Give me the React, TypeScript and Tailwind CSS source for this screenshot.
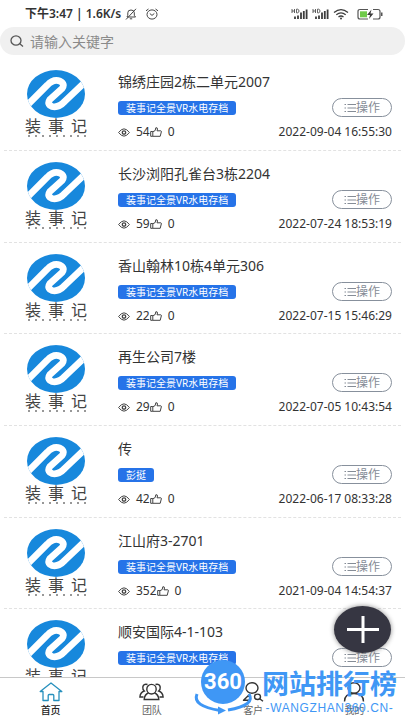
import React, { useState, type JSX } from 'react'

interface Project
{
    id: number;
    title: string;
    tag: string;
    stats?: { views: number; likes: number; date: string };
}

const projects: Project[] =
[
    { id: 1, title: "锦绣庄园2栋二单元2007", tag: "装事记全景VR水电存档", stats: { views: 54, likes: 0, date: "2022-09-04 16:55:30" } },
    { id: 2, title: "长沙浏阳孔雀台3栋2204", tag: "装事记全景VR水电存档", stats: { views: 59, likes: 0, date: "2022-07-24 18:53:19" } },
    { id: 3, title: "香山翰林10栋4单元306", tag: "装事记全景VR水电存档", stats: { views: 22, likes: 0, date: "2022-07-15 15:46:29" } },
    { id: 4, title: "再生公司7楼", tag: "装事记全景VR水电存档", stats: { views: 29, likes: 0, date: "2022-07-05 10:43:54" } },
    { id: 5, title: "传", tag: "彭挺", stats: { views: 42, likes: 0, date: "2022-06-17 08:33:28" } },
    { id: 6, title: "江山府3-2701", tag: "装事记全景VR水电存档", stats: { views: 352, likes: 0, date: "2021-09-04 14:54:37" } },
    { id: 7, title: "顺安国际4-1-103", tag: "装事记全景VR水电存档" },
];

const SignalSVG = (): JSX.Element => (
    <svg viewBox="0 0 17 12" className="w-[17px] h-3" fill="none" stroke="#3c3c3c">
        <path d="M1 1v4M1 3h2.500M3.500 1v4M5.500 1.200v3.600h1.300q1.200-.4 1.200-1.800t-1.200-1.800z" strokeWidth="0.8" />
        <path d="M4 11V8.500M7 11V7.500M10 11V4.500M12.800 11V3M15.600 11V1.500" strokeWidth="1.800" />
    </svg>
)

const StatusBar = (): JSX.Element => (
    <div className="flex h-[27px] shrink-0 items-center justify-between pl-[25px] pr-[22px] text-[12px] font-semibold text-[#333333]">
        <div className="flex items-center gap-1">
            <span>下午3:47 | 1.6K/s</span>

            <svg viewBox="0 0 12 12" className="w-3 h-3" fill="none" stroke="#444444" strokeWidth="1">
                <path d="M2 9h8.500L9.300 7.300V4.800Q9.300 2 6 2T2.800 4.800V7.300ZM4.800 10.800h2.400M11 .8 1 11.500" />
            </svg>

            <svg viewBox="0 0 14 12" className="ml-1 w-3.5 h-3" fill="none" stroke="#444444" strokeWidth="1">
                <ellipse cx="7" cy="6.500" rx="5" ry="4.600" />
                <path d="M1 2.800 3.500 1M13 2.800 10.500 1M4.800 5.500 7 7.400 9.300 5.500" />
            </svg>
        </div>

        <div className="flex items-center gap-1">
            <SignalSVG/>
            <SignalSVG/>

            <svg viewBox="0 0 16 12" className="w-4 h-3" fill="none" stroke="#3c3c3c" strokeWidth="1.300">
                <path d="M1 4.500Q8-1.200 15 4.500M3.300 6.800Q8 3 12.700 6.800M5.500 9Q8 7 10.500 9" />
                <circle cx="8" cy="10.500" r="1" fill="#3c3c3c" stroke="none" />
            </svg>

            <svg viewBox="0 0 26 12" className="ml-1 w-[26px] h-3">
                <path d="M11 1.500H3Q1 1.500 1 3.500V9Q1 11 3 11H11M16 1.500h5q2 0 2 2V9q0 2-2 2H16" fill="none" stroke="#555555" strokeWidth="1.200" />
                <rect x="3" y="3.300" width="7" height="6" fill="#6fca4a" />
                <path d="M14.500 1.500 10 7h3l-1 4 4.500-5.500h-3z" fill="#3c3c3c" />
                <rect x="24" y="4.500" width="1.500" height="3.500" fill="#555555" />
            </svg>
        </div>
    </div>
)

const LogoSVG = (): JSX.Element => (
    <svg viewBox="80 31 172 142" className="w-[58px] h-12">
        <defs>
            <clipPath id="logoClip">
                <ellipse cx="166" cy="102" rx="86" ry="71" />
            </clipPath>
        </defs>
        <g clipPath="url(#logoClip)">
            <rect x="80" y="31" width="172" height="142" fill="#1788dc" />
            <path
                d="M62 154 140 76Q159 56 178 64Q194 72 184 86L148 118Q138 132 154 139Q173 144 192 124L270 50"
                fill="none"
                stroke="#ffffff"
                strokeWidth="20"
            />
        </g>
    </svg>
)

const ProjectLogo = (): JSX.Element => (
    <div className="flex w-[62px] shrink-0 flex-col items-center pt-[11px]">
        <LogoSVG/>

        <div className="flex h-[17px] w-full justify-between text-[16px] leading-[17px] text-[#444444]">
            <span>装</span>
            <span>事</span>
            <span>记</span>
        </div>

        <svg viewBox="0 0 60 2" className="w-[60px] h-0.5">
            <path d="M2 1H60" stroke="#777777" strokeWidth="1.500" strokeDasharray="2 5" />
        </svg>
    </div>
)

const ProjectRow: React.FC<{ project: Project }> = ({project}): JSX.Element => (
    <li className="flex h-[92px] shrink-0 gap-[31px] overflow-hidden border-b border-dashed border-[#e2e2e2] pl-[21px] pr-[9px] nth-[3n]:h-[91px]">
        <ProjectLogo/>

        <div className="min-w-0 grow pt-3">
            <h2 className="truncate text-[14px] leading-[22px] text-[#333333]">{project.title}</h2>

            <div className="mt-[5px] flex items-center justify-between">
                <span className="h-[14px] rounded-[3px] bg-[#2673e8] px-2 text-[10px] leading-[14px] text-white">{project.tag}</span>

                <button type="button" className="flex h-[19px] w-[60px] items-center justify-center rounded-full border border-[#87909c] text-[12px] leading-4 text-[#858c96]">
                    <svg viewBox="0 0 12 10" className="w-3 h-2.5" stroke="#858c96" strokeWidth="1">
                        <path d="M3.500 1.500H12M3.500 5H12M3.500 8.500H12M.5 1.500H2M.5 5H2M.5 8.500H2" />
                    </svg>
                    操作
                </button>
            </div>

            {project.stats && (
                <div className="mt-[5px] flex h-5 items-center text-[12px] text-[#333333]">
                    <svg viewBox="0 0 12 9" className="mr-1.5 w-3 h-[9px]" fill="none" stroke="#444444" strokeWidth="1">
                        <path d="M.6 4.500Q6-2.800 11.400 4.500Q6 11.800.6 4.500Z" />
                        <circle cx="6" cy="4.500" r="1.700" strokeWidth="1.300" />
                    </svg>
                    <span>{project.stats.views}</span>
                    <svg viewBox="0 0 12 10" className="mr-1.5 w-3 h-2.5" fill="none" stroke="#444444" strokeWidth="1">
                        <path d="M.7 4.500H2.800V9.300H.7ZM2.800 4.800 5.200 3.500 5.800.8Q7.500.3 7.500 2L7 3.800H10.800Q11.600 4 11.300 5L10.200 9.300H2.800" />
                    </svg>
                    <span>{project.stats.likes}</span>
                    <time className="ml-auto">{project.stats.date}</time>
                </div>
            )}
        </div>
    </li>
)

const HomeSVG = (): JSX.Element => (
    <svg viewBox="0 0 24 20" className="w-6 h-5" fill="none" stroke="#2790bd" strokeWidth="1.300">
        <path d="M4 9.500H1.200L12 1 22.800 9.500H20V18.500H14.800V13.500Q14.800 12.500 13.800 12.500H10.200Q9.200 12.500 9.200 13.500V18.500H4Z" strokeLinejoin="round" />
    </svg>
)

const TeamSVG = (): JSX.Element => (
    <svg viewBox="0 0 25 20" className="w-[25px] h-5" fill="none" stroke="#333333" strokeWidth="1.400">
        <ellipse cx="12.500" cy="7.200" rx="4.700" ry="4.800" />
        <path d="M9.500 11Q5.500 12.500 5.200 17.500H19.800Q19.500 12.500 15.500 11" />
        <path d="M8.500 2.500Q4.500 1.500 3.800 5Q3.500 7.500 5.300 9Q1.200 10.500.9 15H4.500M16.500 2.500Q20.500 1.500 21.200 5Q21.500 7.500 19.700 9Q23.800 10.500 24.100 15H20.500" />
    </svg>
)

const CustomerSVG = (): JSX.Element => (
    <svg viewBox="0 0 22 20" className="w-[22px] h-5" fill="none" stroke="#333333" strokeWidth="1.400">
        <ellipse cx="10" cy="6" rx="6" ry="5.200" />
        <path d="M7.500 12.500 1.500 18.300H8Z" strokeLinejoin="round" />
        <ellipse cx="15.500" cy="14.800" rx="3" ry="2.700" />
        <path d="M17.700 16.700 21 19.300" />
    </svg>
)

const ProfileSVG = (): JSX.Element => (
    <svg viewBox="0 0 22 20" className="w-[22px] h-5" fill="none" stroke="#333333" strokeWidth="1.400">
        <ellipse cx="11" cy="6" rx="6" ry="5.200" />
        <path d="M1.500 19.500Q1.500 11.500 11 11.500T20.500 19.500" />
    </svg>
)

const tabs =
[
    { label: "首页", icon: <HomeSVG/> },
    { label: "团队", icon: <TeamSVG/> },
    { label: "客户", icon: <CustomerSVG/> },
    { label: "我的", icon: <ProfileSVG/> },
];

const Watermark = (): JSX.Element => (
    <div className="pointer-events-none absolute bottom-1 right-2 flex items-end gap-1.5 text-[#3f97f5]">
        <div className="relative mb-0.5 h-[54px] w-[62px]">
            <svg viewBox="0 0 62 54" className="w-[62px] h-[54px] overflow-visible" fill="none" stroke="#3f97f5">
                <circle cx="29" cy="22" r="22" fill="#3f97f5" stroke="none" />
                <path d="M3 34Q-2 46 26 50.500" strokeWidth="3" />
                <path d="M24 46.500 32 50.500 24 54.500Z" fill="#3f97f5" stroke="none" />
                <path d="M55 34Q62 45 34 50" strokeWidth="3" />
            </svg>
            <span className="absolute left-0 top-2 w-[58px] text-center font-[Roboto] text-[22px] font-bold leading-7 text-white">360</span>
        </div>

        <div className="flex flex-col items-center">
            <span className="text-[27px] font-bold leading-8">网站排行榜</span>
            <span className="font-['Liberation_Sans'] text-[12px] leading-4 tracking-wider whitespace-nowrap">-WANGZHAN360.CN-</span>
        </div>
    </div>
)

const App: React.FC = (): JSX.Element =>
{
    const [search, setSearch] = useState<string>("");
    const [activeTab, setActiveTab] = useState<string>("首页");

    const visible = projects.filter((p) => p.title.includes(search));

    return (
        <div className="relative flex h-screen flex-col overflow-hidden bg-white font-['Noto_Sans','Noto_Sans_CJK_SC',sans-serif]">
            <StatusBar/>

            <label className="flex h-7 shrink-0 items-center gap-1.5 rounded-full bg-[#f0f0f0] pl-2.5 pr-4">
                <svg viewBox="0 0 14 12" className="w-3.5 h-3" fill="none" stroke="#555555" strokeWidth="1.300">
                    <ellipse cx="6" cy="5.500" rx="5" ry="4.700" />
                    <path d="M9.800 8.800 13 11.500" />
                </svg>
                <input
                    type="search"
                    aria-label="搜索"
                    placeholder="请输入关键字"
                    value={search}
                    onChange={(e) => setSearch(e.target.value)}
                    className="min-w-0 grow bg-transparent text-[14px] text-[#333333] outline-none placeholder:text-[#8a8a8a]"
                />
            </label>

            <ul className="mx-1 mt-1 flex min-h-0 grow flex-col overflow-hidden">
                {visible.map((p) => <ProjectRow key={p.id} project={p}/>)}
            </ul>

            {/*Add project*/}
            <button
                type="button"
                aria-label="新增"
                className="absolute bottom-[67px] right-[14px] flex h-[47px] w-[57px] items-center justify-center rounded-[50%] bg-[#363642] shadow-[0_0_5px_#888888]"
            >
                <svg viewBox="0 0 32 27" className="w-8 h-[27px]" stroke="#ffffff" strokeWidth="3">
                    <path d="M0 13.500H32M16 0V27" />
                </svg>
            </button>

            <nav className="grid h-[43px] shrink-0 grid-cols-4 border-t border-[#c8c8c8] bg-white">
                {tabs.map((tab) => (
                    <button
                        key={tab.label}
                        type="button"
                        onClick={() => setActiveTab(tab.label)}
                        className={`flex flex-col items-center pt-1 text-[10px] leading-4 ${activeTab === tab.label ? "font-medium text-[#222222]" : "text-[#666666]"}`}
                    >
                        {tab.icon}
                        {tab.label}
                    </button>
                ))}
            </nav>

            <Watermark/>
        </div>
    )
}

export default App
